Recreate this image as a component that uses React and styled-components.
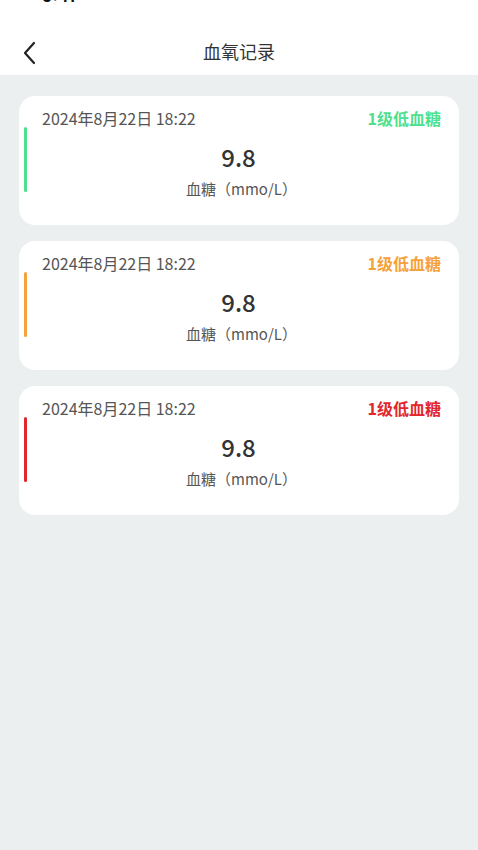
import React from "react";
import styled, { createGlobalStyle } from "styled-components";

const Global = createGlobalStyle`
  html, body { margin: 0; padding: 0; }
  body {
    background: #ebeff0;
    font-family: "Noto Sans CJK SC", "Noto Sans", sans-serif;
  }
`;

const Page = styled.div`
  width: 478px;
  min-height: 850px;
  background: #ebeff0;
  display: flex;
  flex-direction: column;
`;

const Top = styled.div`
  background: #ffffff;
  display: flex;
  flex-direction: column;
`;

const StatusBar = styled.div`
  height: 31px;
  overflow: hidden;
  padding-left: 42px;
`;

const Clock = styled.div`
  margin-top: -13px;
  font-size: 16px;
  line-height: 18px;
  font-weight: 700;
  color: #111;
  font-family: "Inter", "Noto Sans", sans-serif;
`;

const NavBar = styled.div`
  height: 44px;
  display: grid;
  grid-template-columns: 60px 1fr 60px;
  align-items: center;
`;

const Back = styled.button`
  border: none;
  background: none;
  padding: 0 0 0 22px;
  display: flex;
  align-items: center;
  cursor: pointer;
`;

const Title = styled.h1`
  margin: 0;
  text-align: center;
  font-size: 18px;
  line-height: 24px;
  font-weight: 400;
  color: #333;
  margin-top: -4px;
`;

const List = styled.div`
  display: flex;
  flex-direction: column;
  gap: 16px;
  padding: 21px 19px;
`;

const Card = styled.div`
  position: relative;
  background: #fff;
  border-radius: 16px;
  padding: 12px 18px 26px 23px;
  display: flex;
  flex-direction: column;
`;

const Accent = styled.span`
  position: absolute;
  left: 5px;
  top: 31px;
  width: 3px;
  height: 65px;
  border-radius: 2px;
  background: ${(p) => p.$color};
`;

const Head = styled.div`
  display: flex;
  justify-content: space-between;
  align-items: center;
  line-height: 20px;
`;

const DateText = styled.span`
  font-size: 16px;
  color: #555;
  white-space: pre;
`;

const Level = styled.span`
  font-size: 16px;
  font-weight: 700;
  color: ${(p) => p.$color};
`;

const Value = styled.div`
  margin-top: 13px;
  padding-right: 6px;
  text-align: center;
  font-size: 24px;
  line-height: 32px;
  color: #333;
  font-weight: 500;
`;

const Unit = styled.div`
  margin-top: 6px;
  text-align: center;
  font-size: 15px;
  line-height: 20px;
  color: #555;
`;

const records = [
  { color: "#4fe08f", level: "1级低血糖" },
  { color: "#f5a23a", level: "1级低血糖" },
  { color: "#e1262c", level: "1级低血糖" },
];

export default function App() {
  return (
    <Page>
      <Global />
      <Top>
        <StatusBar>
          <Clock>9:41</Clock>
        </StatusBar>
        <NavBar>
          <Back aria-label="back">
            <svg width="14" height="24" viewBox="0 0 14 24">
              <path d="M12 2 L3 12 L12 22" fill="none" stroke="#222" strokeWidth="2.2" strokeLinecap="round" strokeLinejoin="round" />
            </svg>
          </Back>
          <Title>血氧记录</Title>
          <span />
        </NavBar>
      </Top>
      <List>
        {records.map((r, i) => (
          <Card key={i}>
            <Accent $color={r.color} />
            <Head>
              <DateText>{"2024年8月22日 18:22"}</DateText>
              <Level $color={r.color}>{r.level}</Level>
            </Head>
            <Value>9.8</Value>
            <Unit>血糖（mmo/L）</Unit>
          </Card>
        ))}
      </List>
    </Page>
  );
}
